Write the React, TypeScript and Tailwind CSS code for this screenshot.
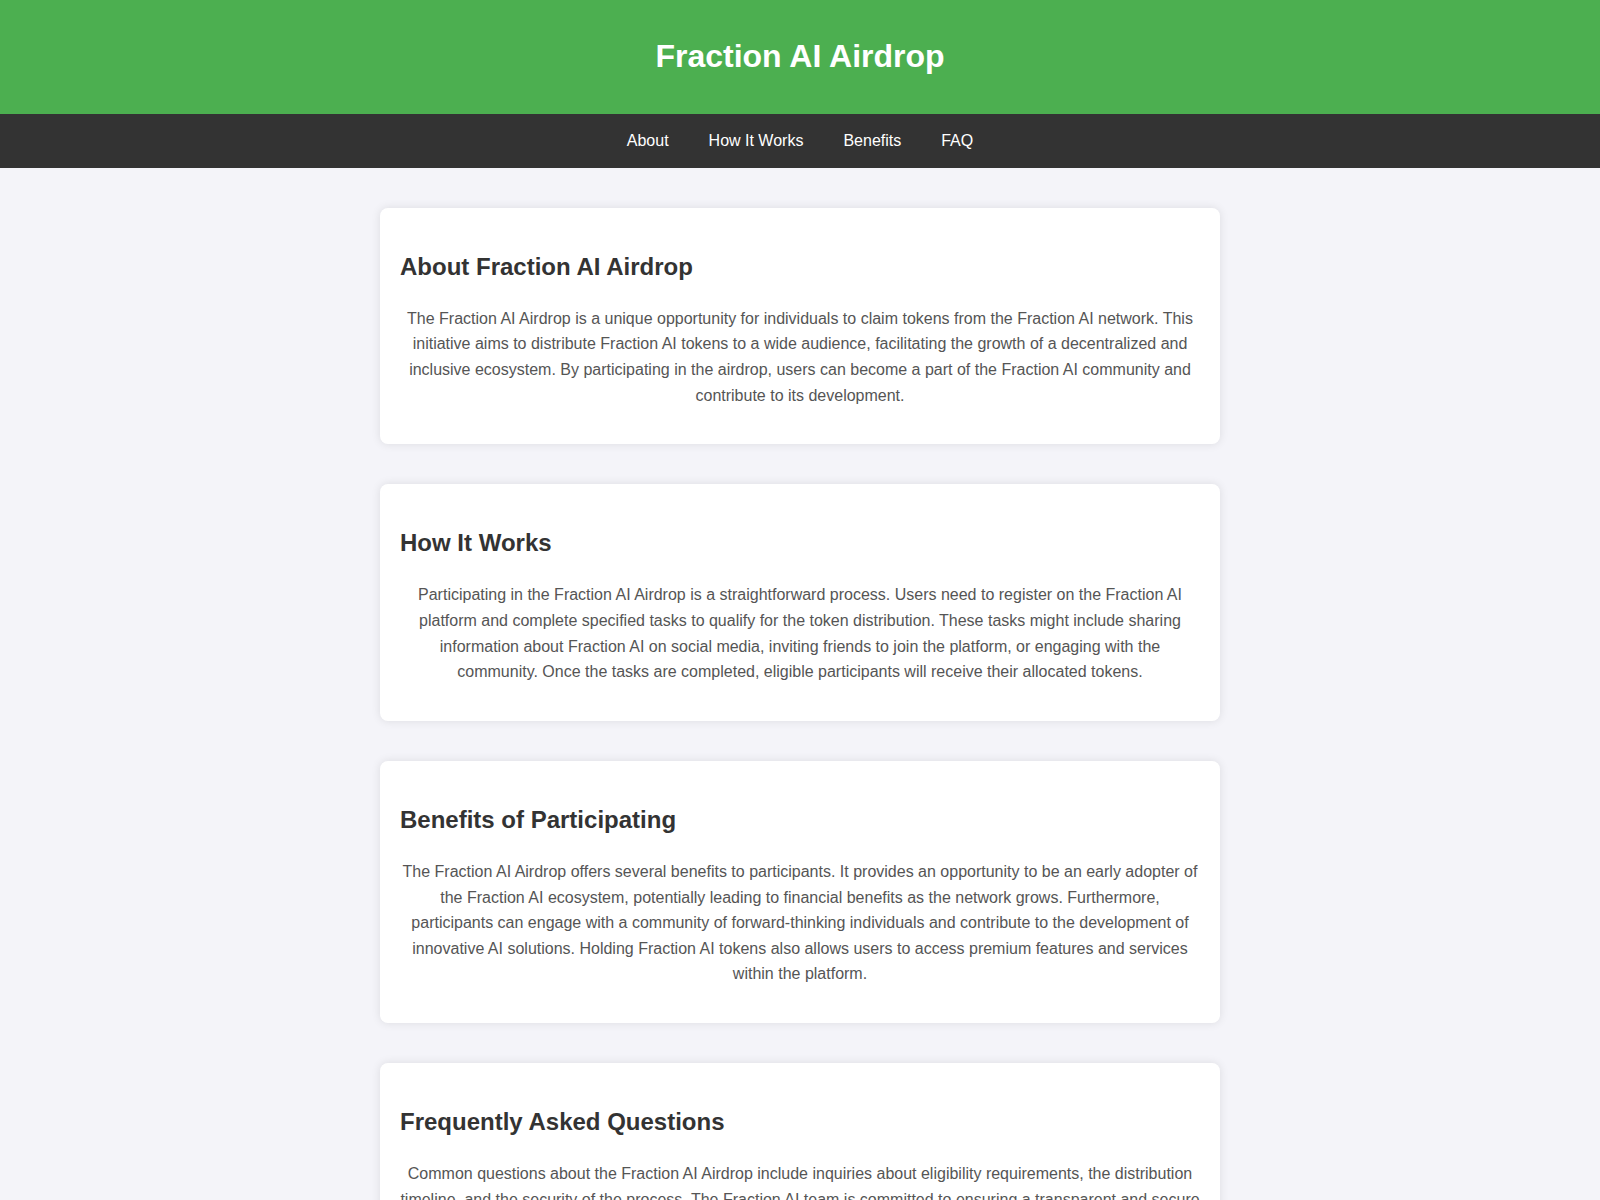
import React from 'react';

const sections = [
    {
        id: 'about',
        title: 'About Fraction AI Airdrop',
        body: 'The Fraction AI Airdrop is a unique opportunity for individuals to claim tokens from the Fraction AI network. This initiative aims to distribute Fraction AI tokens to a wide audience, facilitating the growth of a decentralized and inclusive ecosystem. By participating in the airdrop, users can become a part of the Fraction AI community and contribute to its development.',
    },
    {
        id: 'how-it-works',
        title: 'How It Works',
        body: 'Participating in the Fraction AI Airdrop is a straightforward process. Users need to register on the Fraction AI platform and complete specified tasks to qualify for the token distribution. These tasks might include sharing information about Fraction AI on social media, inviting friends to join the platform, or engaging with the community. Once the tasks are completed, eligible participants will receive their allocated tokens.',
    },
    {
        id: 'benefits',
        title: 'Benefits of Participating',
        body: 'The Fraction AI Airdrop offers several benefits to participants. It provides an opportunity to be an early adopter of the Fraction AI ecosystem, potentially leading to financial benefits as the network grows. Furthermore, participants can engage with a community of forward-thinking individuals and contribute to the development of innovative AI solutions. Holding Fraction AI tokens also allows users to access premium features and services within the platform.',
    },
    {
        id: 'faq',
        title: 'Frequently Asked Questions',
        body: 'Common questions about the Fraction AI Airdrop include inquiries about eligibility requirements, the distribution timeline, and the security of the process. The Fraction AI team is committed to ensuring a transparent and secure airdrop experience for all participants, and detailed answers are available on the official Fraction AI channels.',
    },
];

const links = [
    { href: '#about', label: 'About' },
    { href: '#how-it-works', label: 'How It Works' },
    { href: '#benefits', label: 'Benefits' },
    { href: '#faq', label: 'FAQ' },
];

export default function App() {
    return (
        <div className="min-h-screen bg-[#f4f4f9] font-['Liberation_Sans',Arial,sans-serif] text-base leading-[1.6] text-[#333]">
            <header className="bg-[#4caf50] py-[10px] text-center text-white">
                <h1 className="my-[21.44px] text-[32px] font-bold leading-[1.6]">
                    Fraction AI Airdrop
                </h1>
            </header>
            <nav className="flex justify-center bg-[#333] py-[14px]">
                {links.map((link) => (
                    <a
                        key={link.href}
                        href={link.href}
                        className="mx-[20px] leading-[1.6] text-white"
                    >
                        {link.label}
                    </a>
                ))}
            </nav>
            <main className="pb-[40px]">
                {sections.map((section) => (
                    <section
                        key={section.id}
                        id={section.id}
                        className="mx-auto mt-[40px] max-w-[800px] box-content rounded-lg bg-white p-[20px] shadow-[0_0_10px_rgba(0,0,0,0.1)]"
                    >
                        <h2 className="my-[19.92px] text-2xl font-bold leading-[1.6] text-[#333]">
                            {section.title}
                        </h2>
                        <p className="mb-4 text-center leading-[1.6] text-[#555]">
                            {section.body}
                        </p>
                    </section>
                ))}
            </main>
        </div>
    );
}
